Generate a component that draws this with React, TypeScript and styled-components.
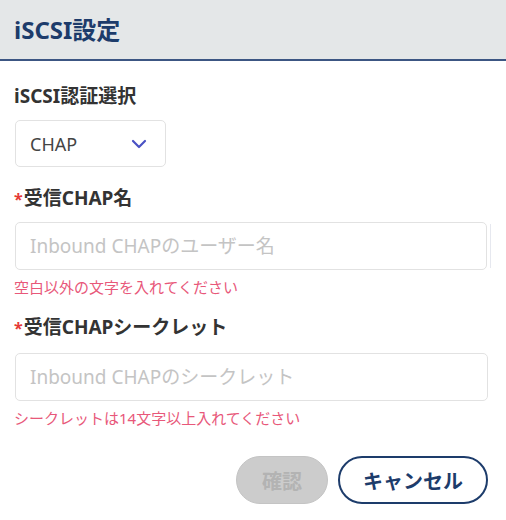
import React from 'react';
import styled, { createGlobalStyle } from 'styled-components';

const GlobalStyle = createGlobalStyle`
  html, body {
    margin: 0;
    padding: 0;
    background: #ffffff;
    font-family: "Noto Sans", "Noto Sans CJK JP", sans-serif;
  }
`;

const Page = styled.div`
  width: 506px;
  height: 520px;
  background: #ffffff;
  overflow: hidden;
`;

const Header = styled.header`
  height: 59px;
  display: flex;
  align-items: center;
  padding-left: 14px;
  background: #e4e7e8;
  border-bottom: 2px solid #3c5683;
`;

const Title = styled.h1`
  margin: 0;
  font-size: 24px;
  line-height: 30px;
  font-weight: 700;
  color: #1d3c6b;
`;

const Form = styled.div`
  padding: 24px 15px 0 15px;
`;

const Field = styled.div<{ $top?: number }>`
  margin-top: ${(p) => p.$top ?? 0}px;
`;

const Label = styled.div<{ $gap: number }>`
  font-size: 19px;
  line-height: 22px;
  font-weight: 700;
  color: #333333;
  margin-left: -1px;
  margin-bottom: ${(p) => p.$gap}px;
`;

const Required = styled.span`
  color: #e53935;
  font-size: 16px;
  margin-right: 1px;
`;

const SelectBox = styled.div`
  width: 151px;
  height: 47px;
  box-sizing: border-box;
  border: 1px solid #e2e2e2;
  border-radius: 5px;
  display: flex;
  align-items: center;
  justify-content: space-between;
  padding: 0 18px 0 14px;
`;

const SelectValue = styled.span`
  font-size: 18px;
  color: #444444;
`;

const InputRow = styled.div`
  display: flex;
  align-items: stretch;
  gap: 3px;
`;

const TextInput = styled.input`
  width: 473px;
  height: 48px;
  box-sizing: border-box;
  border: 1px solid #e2e2e2;
  border-radius: 5px;
  padding: 0 14px;
  font-family: inherit;
  font-size: 19px;
  color: #333333;
  outline: none;
  &::placeholder {
    color: #c4c4c4;
  }
`;

const EdgeLine = styled.div`
  width: 1px;
  margin: 2px 0;
  background: #e6e8ef;
`;

const ErrorText = styled.div`
  margin-top: 7px;
  margin-left: -1px;
  font-size: 15px;
  line-height: 20px;
  color: #e8587a;
`;

const Actions = styled.div`
  margin-top: 28px;
  display: flex;
  justify-content: flex-end;
  gap: 10px;
  padding-right: 3px;
`;

const PillButton = styled.button<{ $variant: 'disabled' | 'outline' }>`
  height: 48px;
  box-sizing: border-box;
  border-radius: 24px;
  font-family: inherit;
  font-size: 20px;
  font-weight: 700;
  padding: 0;
  cursor: pointer;
  ${(p) =>
    p.$variant === 'disabled'
      ? `
    width: 92px;
    background: #cccccc;
    border: 1px solid #c4c4c4;
    color: #b3b3b3;
  `
      : `
    width: 150px;
    background: #ffffff;
    border: 2px solid #1d3c6b;
    color: #1d3c6b;
  `}
`;

const Chevron = () => (
  <svg width="16" height="10" viewBox="0 0 16 10" fill="none">
    <path d="M2 2l6 6 6-6" stroke="#4a52c4" strokeWidth="2.2" strokeLinecap="round" strokeLinejoin="round" />
  </svg>
);

export default function App() {
  return (
    <Page>
      <GlobalStyle />
      <Header>
        <Title>iSCSI設定</Title>
      </Header>
      <Form>
        <Field>
          <Label $gap={13}>iSCSI認証選択</Label>
          <SelectBox>
            <SelectValue>CHAP</SelectValue>
            <Chevron />
          </SelectBox>
        </Field>
        <Field $top={20}>
          <Label $gap={12}>
            <Required>*</Required>受信CHAP名
          </Label>
          <InputRow>
            <TextInput placeholder="Inbound CHAPのユーザー名" />
            <EdgeLine />
          </InputRow>
          <ErrorText>空白以外の文字を入れてください</ErrorText>
        </Field>
        <Field $top={19}>
          <Label $gap={14}>
            <Required>*</Required>受信CHAPシークレット
          </Label>
          <TextInput placeholder="Inbound CHAPのシークレット" />
          <ErrorText>シークレットは14文字以上入れてください</ErrorText>
        </Field>
        <Actions>
          <PillButton $variant="disabled" disabled>
            確認
          </PillButton>
          <PillButton $variant="outline">キャンセル</PillButton>
        </Actions>
      </Form>
    </Page>
  );
}
